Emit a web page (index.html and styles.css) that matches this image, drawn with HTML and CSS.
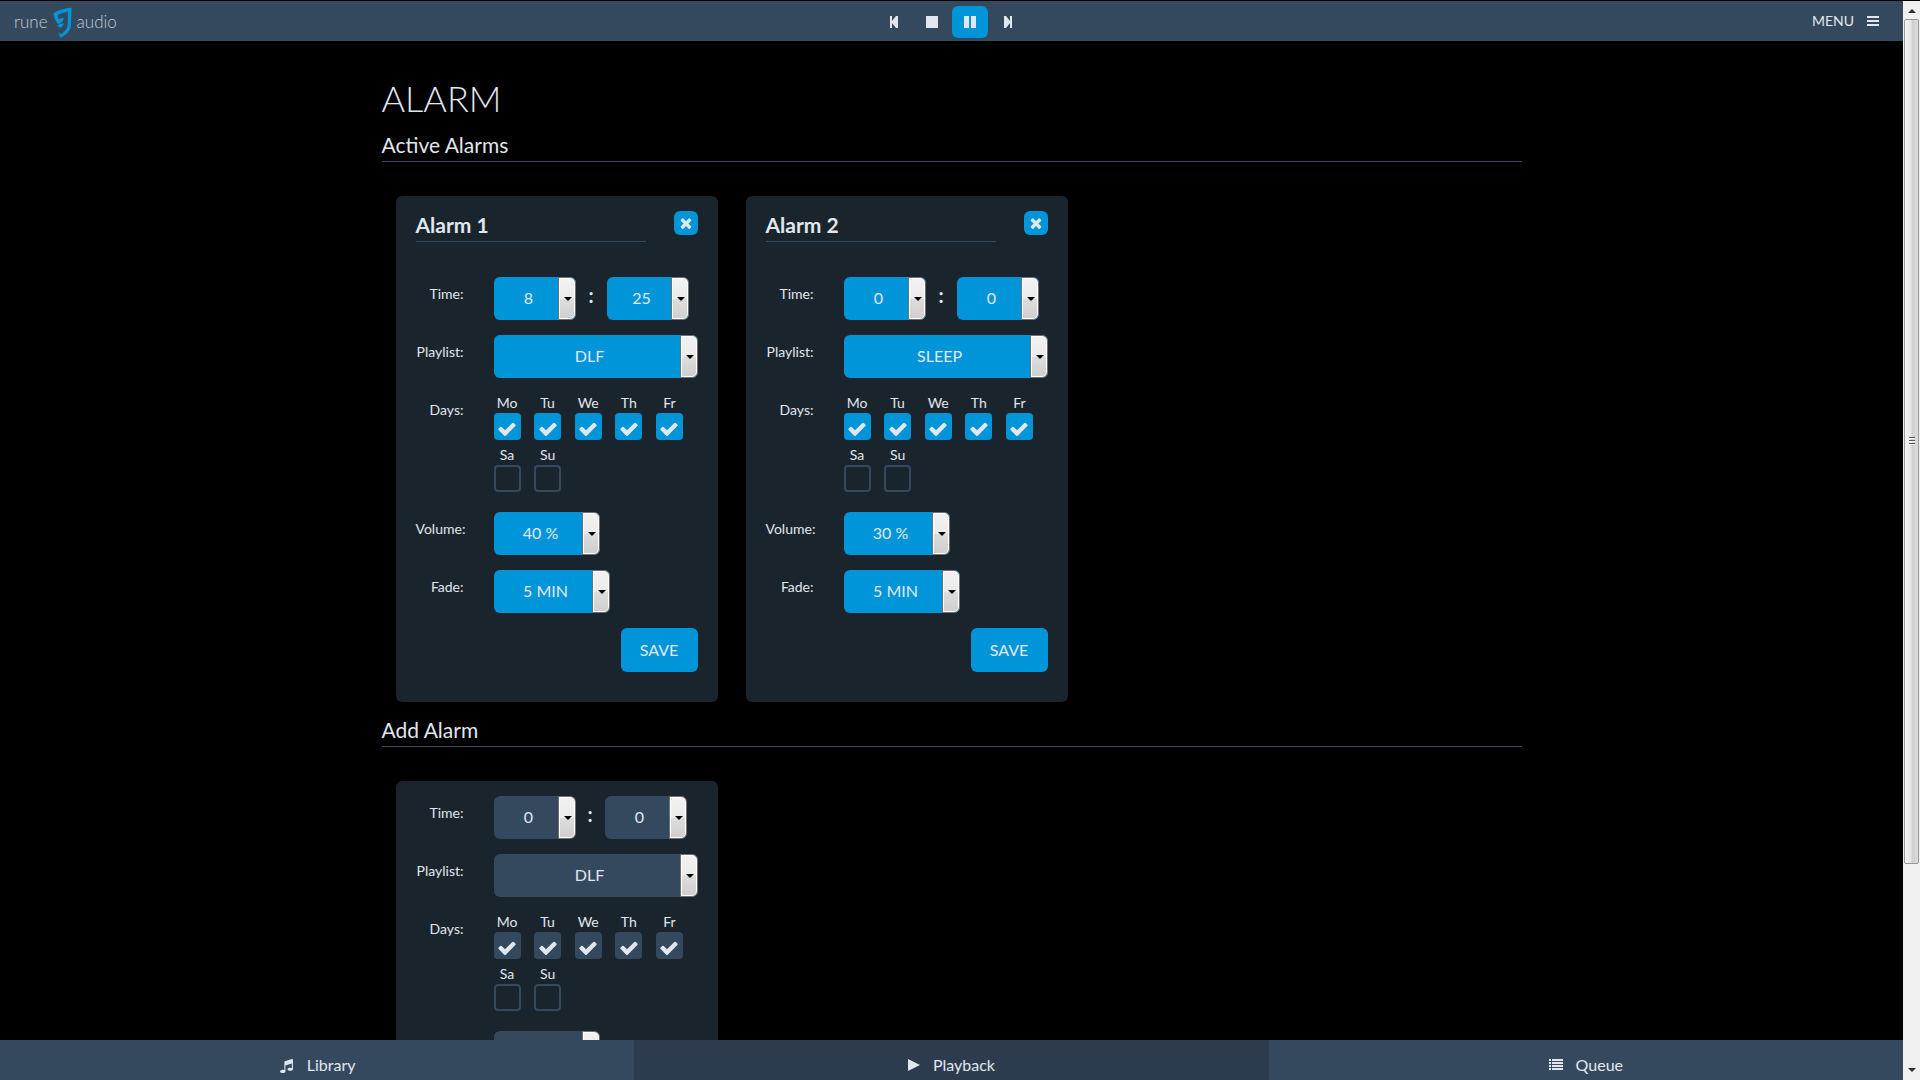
FILE: index.html
```html
<!DOCTYPE html>
<html lang="en">
<head>
<meta charset="utf-8">
<title>Alarm - RuneAudio</title>
<meta name="viewport" content="width=device-width, initial-scale=1">
<link rel="stylesheet" href="styles.css">
</head>
<body>
<svg width="0" height="0" class="sprite" aria-hidden="true">
  <symbol id="check" viewBox="0 0 1792 1792"><path d="M1671 566q0 40-28 68l-724 724-136 136q-28 28-68 28t-68-28l-136-136-362-362q-28-28-28-68t28-68l136-136q28-28 68-28t68 28l294 295 656-657q28-28 68-28t68 28l136 136q28 28 28 68z"/></symbol>
  <symbol id="times" viewBox="0 0 1792 1792"><path d="M1490 1322q0 40-28 68l-136 136q-28 28-68 28t-68-28l-294-294-294 294q-28 28-68 28t-68-28l-136-136q-28-28-28-68t28-68l294-294-294-294q-28-28-28-68t28-68l136-136q28-28 68-28t68 28l294 294 294-294q28-28 68-28t68 28l136 136q28 28 28 68t-28 68l-294 294 294 294q28 28 28 68z"/></symbol>
</svg>
<div class="window">
  <div class="page">
    <header class="topbar">
      <a class="brand" href="#" aria-label="rune audio">
        <span>rune</span>
        <svg width="19" height="31" viewBox="0 0 19 31"><path d="M.5 6Q8 1.800 18.500.500L18 19Q17.500 25 7.700 30.800Q6 28 5.500 25L8 27.300Q14 23.500 14.600 18L15 4.500Q9 5.500 4.500 8L5.500 12L11 10.500Q10.500 14 8 15.500L5.500 17L11 16.500Q10 20 7.500 21L4 18.500L6.500 17.800Q1 14 .5 6Z"/></svg>
        <span>audio</span>
      </a>
      <div class="transport">
        <button type="button" aria-label="Previous"><svg width="12" height="12" viewBox="0 0 12 12"><path d="M2 0h2v5l4-5h2v12h-2l-4-5v5h-2z"/></svg></button>
        <button type="button" aria-label="Stop"><svg width="12" height="12" viewBox="0 0 12 12"><path d="M0 0h12v12H0z"/></svg></button>
        <button type="button" class="on" aria-label="Pause"><svg width="12" height="12" viewBox="0 0 12 12"><path d="M0 0h5v12H0zM7 0h5v12H7z"/></svg></button>
        <button type="button" aria-label="Next"><svg width="12" height="12" viewBox="0 0 12 12"><path d="M10 0H8v5L4 0H2v12h2l4-5v5h2z"/></svg></button>
      </div>
      <button type="button" class="menu">MENU <svg width="12" height="10" viewBox="0 0 12 10"><path d="M0 0h12v2H0zM0 4h12v2H0zM0 8h12v2H0z"/></svg></button>
    </header>

    <main class="content">
      <div class="container">
        <h1>ALARM</h1>
        <h2>Active Alarms</h2>
        <div class="cards">
          <form class="card">
            <div class="card-head">
              <h3>Alarm 1</h3>
              <button type="button" class="close" aria-label="Delete alarm 1"><svg width="16" height="16"><use href="#times"/></svg></button>
            </div>
            <div class="row"><label class="name" for="a1h">Time:</label>
              <div class="time"><span class="pick small"><select id="a1h"><option>8</option></select></span><b>:</b><span class="pick small"><select aria-label="Minutes"><option>25</option></select></span></div></div>
            <div class="row"><label class="name" for="a1p">Playlist:</label><span class="pick wide"><select id="a1p"><option>DLF</option></select></span></div>
            <div class="row"><span class="name">Days:</span>
              <div class="days">
                <label>Mo<span class="tick"><input type="checkbox" checked><svg width="20" height="20"><use href="#check"/></svg></span></label>
                <label>Tu<span class="tick"><input type="checkbox" checked><svg width="20" height="20"><use href="#check"/></svg></span></label>
                <label>We<span class="tick"><input type="checkbox" checked><svg width="20" height="20"><use href="#check"/></svg></span></label>
                <label>Th<span class="tick"><input type="checkbox" checked><svg width="20" height="20"><use href="#check"/></svg></span></label>
                <label>Fr<span class="tick"><input type="checkbox" checked><svg width="20" height="20"><use href="#check"/></svg></span></label>
                <label>Sa<span class="tick"><input type="checkbox"><svg width="20" height="20"><use href="#check"/></svg></span></label>
                <label>Su<span class="tick"><input type="checkbox"><svg width="20" height="20"><use href="#check"/></svg></span></label>
              </div></div>
            <div class="row"><label class="name" for="a1v">Volume:</label><span class="pick volume"><select id="a1v"><option>40 %</option></select></span></div>
            <div class="row"><label class="name" for="a1f">Fade:</label><span class="pick fade"><select id="a1f"><option>5 MIN</option></select></span></div>
            <button type="button" class="save">SAVE</button>
          </form>

          <form class="card">
            <div class="card-head">
              <h3>Alarm 2</h3>
              <button type="button" class="close" aria-label="Delete alarm 2"><svg width="16" height="16"><use href="#times"/></svg></button>
            </div>
            <div class="row"><label class="name" for="a2h">Time:</label>
              <div class="time"><span class="pick small"><select id="a2h"><option>0</option></select></span><b>:</b><span class="pick small"><select aria-label="Minutes"><option>0</option></select></span></div></div>
            <div class="row"><label class="name" for="a2p">Playlist:</label><span class="pick wide"><select id="a2p"><option>SLEEP</option></select></span></div>
            <div class="row"><span class="name">Days:</span>
              <div class="days">
                <label>Mo<span class="tick"><input type="checkbox" checked><svg width="20" height="20"><use href="#check"/></svg></span></label>
                <label>Tu<span class="tick"><input type="checkbox" checked><svg width="20" height="20"><use href="#check"/></svg></span></label>
                <label>We<span class="tick"><input type="checkbox" checked><svg width="20" height="20"><use href="#check"/></svg></span></label>
                <label>Th<span class="tick"><input type="checkbox" checked><svg width="20" height="20"><use href="#check"/></svg></span></label>
                <label>Fr<span class="tick"><input type="checkbox" checked><svg width="20" height="20"><use href="#check"/></svg></span></label>
                <label>Sa<span class="tick"><input type="checkbox"><svg width="20" height="20"><use href="#check"/></svg></span></label>
                <label>Su<span class="tick"><input type="checkbox"><svg width="20" height="20"><use href="#check"/></svg></span></label>
              </div></div>
            <div class="row"><label class="name" for="a2v">Volume:</label><span class="pick volume"><select id="a2v"><option>30 %</option></select></span></div>
            <div class="row"><label class="name" for="a2f">Fade:</label><span class="pick fade"><select id="a2f"><option>5 MIN</option></select></span></div>
            <button type="button" class="save">SAVE</button>
          </form>
        </div>

        <h2>Add Alarm</h2>
        <div class="cards">
          <form class="card new">
            <div class="row"><label class="name" for="a3h">Time:</label>
              <div class="time"><span class="pick small"><select id="a3h"><option>0</option></select></span><b>:</b><span class="pick small"><select aria-label="Minutes"><option>0</option></select></span></div></div>
            <div class="row"><label class="name" for="a3p">Playlist:</label><span class="pick wide"><select id="a3p"><option>DLF</option></select></span></div>
            <div class="row"><span class="name">Days:</span>
              <div class="days">
                <label>Mo<span class="tick"><input type="checkbox" checked><svg width="20" height="20"><use href="#check"/></svg></span></label>
                <label>Tu<span class="tick"><input type="checkbox" checked><svg width="20" height="20"><use href="#check"/></svg></span></label>
                <label>We<span class="tick"><input type="checkbox" checked><svg width="20" height="20"><use href="#check"/></svg></span></label>
                <label>Th<span class="tick"><input type="checkbox" checked><svg width="20" height="20"><use href="#check"/></svg></span></label>
                <label>Fr<span class="tick"><input type="checkbox" checked><svg width="20" height="20"><use href="#check"/></svg></span></label>
                <label>Sa<span class="tick"><input type="checkbox"><svg width="20" height="20"><use href="#check"/></svg></span></label>
                <label>Su<span class="tick"><input type="checkbox"><svg width="20" height="20"><use href="#check"/></svg></span></label>
              </div></div>
            <div class="row"><span class="name"></span><span class="pick volume"><select aria-label="Volume"><option></option></select></span></div>
          </form>
        </div>
      </div>
    </main>

    <nav class="tabs">
      <a href="#"><svg width="15" height="15" viewBox="0 0 1792 1792"><path d="M1664 224v1120q0 50-34 89t-86 60.500-103.500 32-96.500 10.500-96.500-10.500-103.500-32-86-60.500-34-89 34-89 86-60.500 103.500-32 96.500-10.500q105 0 192 39v-537l-768 237v709q0 50-34 89t-86 60.500-103.500 32-96.500 10.500-96.500-10.500-103.500-32-86-60.500-34-89 34-89 86-60.500 103.500-32 96.500-10.500q105 0 192 39v-967q0-31 19-56.500t49-35.500l832-256q12-4 28-4 40 0 68 28t28 68z"/></svg>Library</a>
      <a href="#" class="current"><svg width="12" height="12" viewBox="0 0 12 12"><path d="M0 0L12 6L0 12z"/></svg>Playback</a>
      <a href="#"><svg width="14" height="12" viewBox="0 0 14 12"><path d="M0 0h2v2H0zM3 0h11v2H3zM0 3h2v2H0zM3 3h11v2H3zM0 6h2v2H0zM3 6h11v2H3zM0 9h2v2H0zM3 9h11v2H3z"/></svg>Queue</a>
    </nav>
  </div>

  <div class="scrollbar" aria-hidden="true">
    <svg width="8" height="4" viewBox="0 0 8 4"><path d="M4 0L8 4H0z"/></svg>
    <div class="track"><div class="thumb"><i></i><i></i><i></i></div></div>
    <svg width="8" height="4" viewBox="0 0 8 4"><path d="M0 0h8L4 4z"/></svg>
  </div>
</div>
</body>
</html>
```
FILE: styles.css
```css
:root {
  --bar: #34495e;
  --bar-dark: #2c3c4e;
  --accent: #0095d8;
  --card: #1a242d;
  --text: #e0e7ee;
}

* { box-sizing: border-box; }

body {
  margin: 0;
  background: #000;
  color: var(--text);
  font: 14px/20px Lato, sans-serif;
}

svg { fill: currentColor; display: block; flex: none; }
.sprite { position: absolute; }
h1, h2, h3 { margin: 0; }
a { color: inherit; text-decoration: none; }
button, select, input { font: inherit; color: inherit; margin: 0; padding: 0; border: 0; }
button { background: none; cursor: pointer; }

.window { display: flex; height: 100vh; padding-top: 1px; }
.page { flex: 1; min-width: 0; display: flex; flex-direction: column; }

/* Top bar */
.topbar {
  display: grid;
  grid-template-columns: 1fr auto 1fr;
  align-items: center;
  height: 40px;
  padding: 2px 24px 0 14px;
  background: var(--bar);
}
.brand {
  display: flex;
  align-items: center;
  gap: 5px;
  font-size: 17px;
  font-weight: 300;
  color: #c0cad4;
}
.brand svg { fill: var(--accent); }
.transport { display: flex; gap: 2px; margin-left: 9px; }
.transport button {
  display: grid;
  place-items: center;
  width: 36px;
  height: 32px;
  border-radius: 6px;
}
.transport .on { background: var(--accent); }
.menu {
  display: flex;
  align-items: center;
  justify-self: end;
  gap: 13px;
  padding-bottom: 2px;
}

/* Content */
.content { flex: 1; min-height: 0; overflow: hidden; }
.container { max-width: 1140px; margin: 0 auto; padding-top: 38px; }
h1 { font-size: 36px; line-height: 38px; font-weight: 300; }
h2 {
  margin-top: 14px;
  padding-bottom: 2px;
  border-bottom: 1px solid var(--bar);
  font-size: 21px;
  line-height: 28px;
  font-weight: 400;
}
.cards { display: flex; flex-wrap: wrap; gap: 28px; padding: 34px 14px 0; }

.card {
  display: flex;
  flex-direction: column;
  gap: 15px;
  width: 322px;
  padding: 15px 20px 30px;
  border-radius: 6px;
  background: var(--card);
  --control: var(--accent);
}
.card.new { --control: var(--bar); }
.card-head {
  display: flex;
  justify-content: space-between;
  align-items: flex-start;
  margin-bottom: 20px;
}
h3 {
  width: 230px;
  padding-bottom: 2px;
  border-bottom: 1px solid var(--bar);
  font-size: 21px;
  line-height: 28px;
  font-weight: 700;
}
.close {
  display: grid;
  place-items: center;
  width: 24px;
  height: 24px;
  border-radius: 6px;
  background: var(--accent);
}

.row { display: grid; grid-template-columns: 48px 204px; column-gap: 30px; }
.name { padding-top: 7px; justify-self: start; min-width: 100%; text-align: right; white-space: nowrap; }
.time { display: flex; gap: 13px; }
.new .time { gap: 12px; }
.time b { padding-top: 8px; width: 5px; font-size: 20px; }

.pick { position: relative; height: 43px; }
.pick select {
  appearance: none;
  width: 100%;
  height: 100%;
  padding: 0 12px 2px 0;
  border-radius: 6px;
  background: var(--control);
  font-size: 16px;
  text-align-last: center;
}
/* Drop-down handle with its arrow */
.pick::before, .pick::after { content: ""; position: absolute; pointer-events: none; }
.pick::before {
  inset: 0 0 0 auto;
  width: 16px;
  border: 1px solid #707070;
  border-radius: 0 6px 6px 0;
  background: linear-gradient(#f2f2f2, #ebebeb 50%, #dddddd 50%, #cfcfcf);
  box-shadow: inset 0 0 0 1px #fff;
}
.pick::after {
  right: 4px;
  top: 20px;
  border: solid transparent;
  border-width: 4px 4px 0;
  border-top-color: #000;
}
.small { width: 82px; }
.wide { width: 204px; }
.volume { width: 106px; }
.fade { width: 116px; }

.days {
  display: grid;
  grid-template-columns: repeat(5, 1fr);
  row-gap: 5px;
  width: 203px;
  padding-bottom: 5px;
}
.days label { width: 27px; text-align: center; }
.tick { display: grid; color: var(--text); }
.tick > * { grid-area: 1 / 1; }
.tick input {
  appearance: none;
  width: 27px;
  height: 27px;
  border: 2px solid var(--bar);
  border-radius: 4px;
}
.tick input:checked { border: 0; background: var(--control); }
.tick svg { visibility: hidden; place-self: end center; margin-bottom: 1px; pointer-events: none; }
.tick input:checked + svg { visibility: visible; }

.save {
  align-self: flex-end;
  width: 77px;
  height: 44px;
  border-radius: 6px;
  background: var(--accent);
  font-size: 16px;
}

/* Bottom tabs */
.tabs { display: grid; grid-template-columns: repeat(3, 1fr); height: 40px; background: var(--bar); }
.tabs a {
  display: flex;
  align-items: center;
  justify-content: center;
  gap: 13px;
  padding-top: 10px;
  font-size: 16px;
}
.tabs .current { background: var(--bar-dark); }

/* Scroll bar */
.scrollbar {
  display: flex;
  flex-direction: column;
  align-items: center;
  width: 17px;
  padding: 8px 1px;
  background: #f0f0f0;
  color: #303030;
}
.track { flex: 1; align-self: stretch; padding: 6px 0; }
.thumb {
  display: flex;
  flex-direction: column;
  align-items: center;
  justify-content: center;
  gap: 1px;
  height: 81%;
  border: 1px solid #979797;
  border-radius: 2px;
  background: linear-gradient(90deg, #f5f5f5, #e6e6e8 45%, #cfcfd2 55%, #dcdcde);
}
.thumb i { width: 6px; height: 2px; border-top: 1px solid #555; background: #fff; }
```
